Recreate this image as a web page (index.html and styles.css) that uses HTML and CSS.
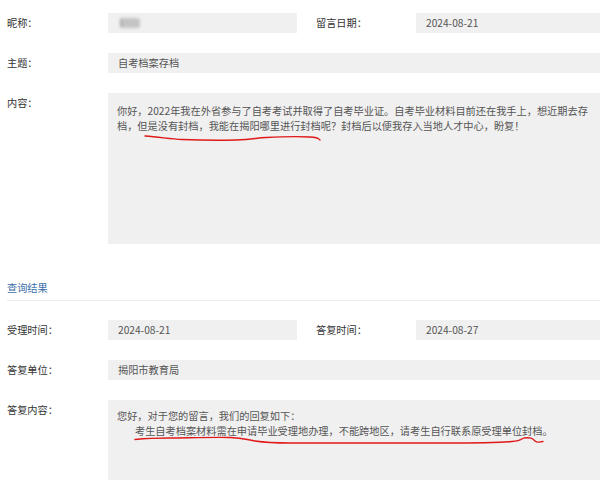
FILE: index.html
```html
<!DOCTYPE html>
<html lang="zh-CN">
<head>
  <meta charset="UTF-8" />
  <meta name="viewport" content="width=device-width, initial-scale=1" />
  <link rel="stylesheet" href="styles.css">
</head>
<body>

  <div class="page">
    <div class="row">
      <div class="label">昵称：</div>
      <div class="field field-short"><span class="blur-name"></span></div>
      <div class="label label-right">留言日期：</div>
      <div class="field">2024-08-21</div>
    </div>
    <div class="row">
      <div class="label">主题：</div>
      <div class="field">自考档案存档</div>
    </div>
    <div class="row">
      <div class="label">内容：</div>
      <div class="field field-text">你好，2022年我在外省参与了自考考试并取得了自考毕业证。自考毕业材料目前还在我手上，想近期去存档，但是没有封档，我能在揭阳哪里进行封档呢？封档后以便我存入当地人才中心，盼复！</div>
    </div>

    <div class="section-title">查询结果</div>

    <div class="row">
      <div class="label">受理时间：</div>
      <div class="field field-short">2024-08-21</div>
      <div class="label label-right">答复时间：</div>
      <div class="field">2024-08-27</div>
    </div>
    <div class="row">
      <div class="label">答复单位：</div>
      <div class="field">揭阳市教育局</div>
    </div>
    <div class="row">
      <div class="label">答复内容：</div>
      <div class="field field-reply">
        <p>您好，对于您的留言，我们的回复如下：</p>
        <p class="indent">考生自考档案材料需在申请毕业受理地办理，不能跨地区，请考生自行联系原受理单位封档。</p>
      </div>
    </div>
  </div>

  <!-- hand-drawn red marks on the screenshot -->
  <svg class="marks" width="600" height="480" viewBox="0 0 600 480">
    <path d="M145 136 C160 137, 170 139, 182 139.5 S220 140.5, 236 140 S256 138, 266 137.5 S300 136.5, 310 137 S318 139, 320 140" />
    <path d="M135 439.5 C145 438.5, 158 438, 170 438 S215 437, 230 437.5 S245 439.5, 255 441 S272 443, 290 443 S380 443, 440 443 S500 442.5, 512 441.5 S520 438, 526 437.8 S532 438.5, 535 441 S540 441.5, 543 441.5" />
  </svg>

</body>
</html>
```

FILE: styles.css
```css
html, body {
  margin: 0;
  padding: 0;
  width: 100%;
  height: 100%;
  overflow: hidden;
  background: #fff;
  font-family: "Noto Sans CJK SC", "Noto Sans", sans-serif;
  font-size: 10.2px;
  color: #333;
  position: relative; /* for the marks overlay */
}

.page {
  padding: 13px 0 0 7px;
  display: flex;
  flex-direction: column;
  gap: 20px;
}

.row {
  display: flex;
  align-items: flex-start;
}

.label {
  width: 101px;
  flex: none;
  height: 20px;
  line-height: 20px;
}

.label-right {
  width: 100px;
  margin-left: 19px;
}

.field {
  flex: 1;
  height: 20px;
  line-height: 20px;
  padding: 0 10px;
  background: #f0f0f0;
  color: #555;
  box-sizing: border-box;
}

.field-short {
  flex: none;
  width: 189px;
}

.field-text {
  height: 151px;
  line-height: 15px;
  padding: 10px 6px 0 9px;
}

.field-reply {
  height: 100px;
  line-height: 15px;
  padding: 8px 6px 0 9px;
}

.field-reply p {
  margin: 0;
}

.field-reply .indent {
  text-indent: 18px;
}

.blur-name {
  display: inline-block;
  vertical-align: middle;
  width: 18px;
  height: 10px;
  margin-left: 2px;
  margin-top: -2px;
  border-left: 2px solid #a5a5a5;
  background: #c4c4c4;
  border-radius: 3px;
  filter: blur(1.5px);
}

.section-title {
  margin-top: 14px;
  line-height: 20px;
  padding-bottom: 2px;
  border-bottom: 1px solid #ececec;
  color: #3c6ea8;
  margin-bottom: -1px;
}

.marks {
  position: absolute;
  left: 0;
  top: 0;
  pointer-events: none;
}

.marks path {
  fill: none;
  stroke: #e01818;
  stroke-width: 1.4;
  stroke-linecap: round;
}
```
